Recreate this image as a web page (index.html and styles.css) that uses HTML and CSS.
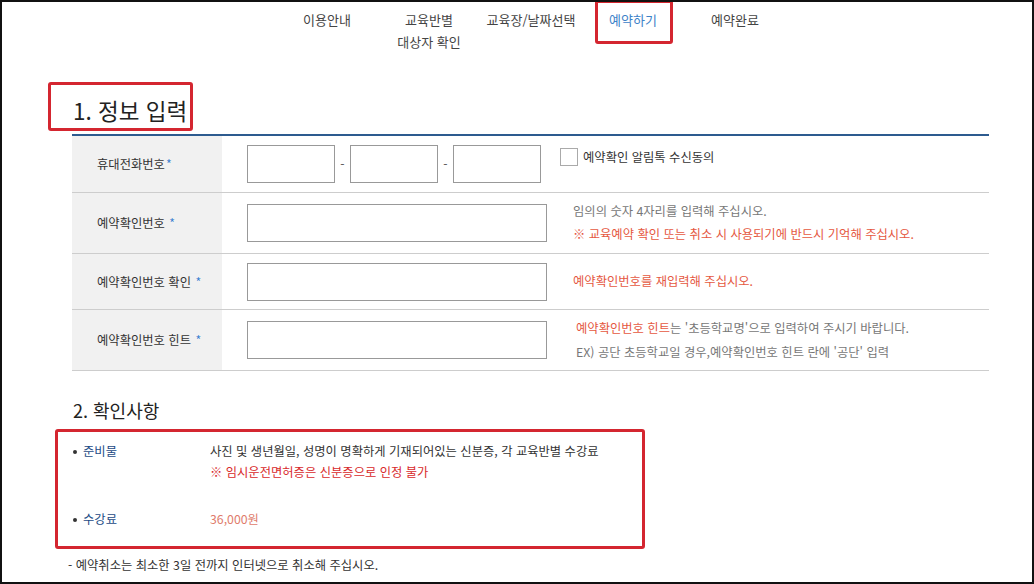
FILE: index.html
```html
<!DOCTYPE html>
<html lang="ko">
<head>
  <meta charset="utf-8">
  <title>교육 예약하기</title>
  <link rel="stylesheet" href="styles.css">
</head>
<body>
  <div class="frame">
    <ul class="steps">
      <li>이용안내</li>
      <li>교육반별<br>대상자 확인</li>
      <li>교육장/날짜선택</li>
      <li class="active">예약하기</li>
      <li>예약완료</li>
    </ul>

    <div class="content">
      <h3 class="title title-main">1. 정보 입력</h3>

      <div class="form-table">
        <div class="row row-phone">
          <div class="label"><span>휴대전화번호<span class="req">*</span></span></div>
          <div class="field">
            <input class="in-short" type="text">
            <span class="dash">-</span>
            <input class="in-short" type="text">
            <span class="dash">-</span>
            <input class="in-short" type="text">
            <label class="agree"><span class="checkbox"></span>예약확인 알림톡 수신동의</label>
          </div>
        </div>

        <div class="row row-tall">
          <div class="label"><span>예약확인번호 <span class="req">*</span></span></div>
          <div class="field">
            <input class="in-long" type="password">
            <p class="note">
              <span class="gray">임의의 숫자 4자리를 입력해 주십시오.</span><br>
              <span class="red">※ 교육예약 확인 또는 취소 시 사용되기에 반드시 기억해 주십시오.</span>
            </p>
          </div>
        </div>

        <div class="row">
          <div class="label"><span>예약확인번호 확인 <span class="req">*</span></span></div>
          <div class="field">
            <input class="in-long" type="password">
            <p class="note"><span class="red">예약확인번호를 재입력해 주십시오.</span></p>
          </div>
        </div>

        <div class="row row-tall">
          <div class="label"><span>예약확인번호 힌트 <span class="req">*</span></span></div>
          <div class="field">
            <input class="in-long" type="text">
            <p class="note note-hint">
              <span class="red">예약확인번호 힌트</span><span class="gray">는 '초등학교명'으로 입력하여 주시기 바랍니다.</span><br>
              <span class="gray">EX) 공단 초등학교일 경우,예약확인번호 힌트 란에 '공단' 입력</span>
            </p>
          </div>
        </div>
      </div>

      <h3 class="title title-sub">2. 확인사항</h3>

      <dl class="check-list">
        <div class="check-item">
          <dt>준비물</dt>
          <dd>
            사진 및 생년월일, 성명이 명확하게 기재되어있는 신분증, 각 교육반별 수강료<br>
            <span class="warn">※ 임시운전면허증은 신분증으로 인정 불가</span>
          </dd>
        </div>
        <div class="check-item">
          <dt>수강료</dt>
          <dd class="price">36,000원</dd>
        </div>
      </dl>

      <p class="cancel-note">- 예약취소는 최소한 3일 전까지 인터넷으로 취소해 주십시오.</p>
    </div>
  </div>
</body>
</html>
```

FILE: styles.css
```css
body {
  margin: 0;
  padding: 0;
  font-family: "Noto Sans CJK KR", "Noto Sans", sans-serif;
  font-size: 12.3px;
  color: #333;
  background: #fff;
}

.frame {
  width: 1034px;
  height: 584px;
  box-sizing: border-box;
  border: 2px solid #111;
  position: relative;
  overflow: hidden;
}

/* step navigation */
.steps {
  list-style: none;
  margin: 0;
  padding: 7px 0 0 274px;
  display: flex;
}

.steps li {
  width: 102px;
  text-align: center;
  font-size: 13px;
  line-height: 22px;
  color: #444;
  position: relative;
}

.steps li.active {
  color: #3c82c8;
}

.steps li.active::after {
  content: "";
  position: absolute;
  left: 13px;
  top: -9px;
  width: 78px;
  height: 44px;
  box-sizing: border-box;
  border: 3px solid #d42630;
  border-radius: 3px;
}

.content {
  padding-left: 70px;
  width: 917px;
}

.title {
  margin: 0;
  font-weight: normal;
  color: #222;
  position: relative;
  padding-left: 1px;
}

.title-main {
  margin-top: 43px;
  font-size: 22.5px;
  line-height: 28px;
  margin-bottom: 10px;
}

.title-main::after {
  content: "";
  position: absolute;
  left: -24px;
  top: -14px;
  width: 145px;
  height: 49px;
  box-sizing: border-box;
  border: 3px solid #d42630;
  border-radius: 3px;
}

.title-sub {
  margin-top: 26px;
  font-size: 18px;
  line-height: 26px;
}

/* form table */
.form-table {
  border-top: 2px solid #2d5b8f;
}

.row {
  display: flex;
  min-height: 55px;
  border-bottom: 1px solid #cdcdcd;
}

.row-phone {
  min-height: 56px;
}

.row-tall {
  min-height: 60px;
}

.label {
  width: 150px;
  box-sizing: border-box;
  padding-left: 25px;
  background: #f1f1f1;
  display: flex;
  align-items: center;
  color: #333;
}

.req {
  color: #3a7fd0;
  margin-left: 1px;
}

.field {
  flex: 1;
  display: flex;
  align-items: center;
  padding-left: 25px;
}

input {
  height: 38px;
  box-sizing: border-box;
  border: 1px solid #999;
  margin: 0;
  padding: 0 6px;
  font: inherit;
}

.in-short {
  width: 88px;
}

.in-long {
  width: 300px;
}

.dash {
  width: 15px;
  text-align: center;
  color: #555;
}

.agree {
  align-self: flex-start;
  margin: 12px 0 0 19px;
  display: flex;
  align-items: center;
  gap: 5px;
  line-height: 18px;
  color: #333;
}

.checkbox {
  width: 18px;
  height: 18px;
  box-sizing: border-box;
  border: 1px solid #aaa;
  background: #fff;
}

.note {
  margin: 0 0 0 26px;
  line-height: 23px;
}

.note-hint {
  margin-left: 29px;
  line-height: 24px;
}

.gray {
  color: #777;
}

.red {
  color: #e5583f;
}

/* check list */
.check-list {
  margin: 18px 0 0;
  position: relative;
  line-height: 21px;
}

.check-list::before {
  content: "";
  position: absolute;
  left: -17px;
  top: -12px;
  width: 590px;
  height: 120px;
  box-sizing: border-box;
  border: 3px solid #d42630;
  border-radius: 3px;
}

.check-item {
  display: flex;
}

.check-item + .check-item {
  margin-top: 26px;
}

.check-item dt {
  width: 138px;
  color: #1d4b86;
  position: relative;
  padding-left: 11px;
  box-sizing: border-box;
}

.check-item dt::before {
  content: "";
  position: absolute;
  left: 1px;
  top: 9px;
  width: 4px;
  height: 4px;
  border-radius: 50%;
  background: #333;
}

.check-item dd {
  margin: 0;
  color: #333;
}

.check-item dd.price {
  color: #e07b6b;
}

.warn {
  color: #d8292b;
}

.cancel-note {
  margin: 25px 0 0 -4px;
  line-height: 21px;
  color: #333;
}
```
